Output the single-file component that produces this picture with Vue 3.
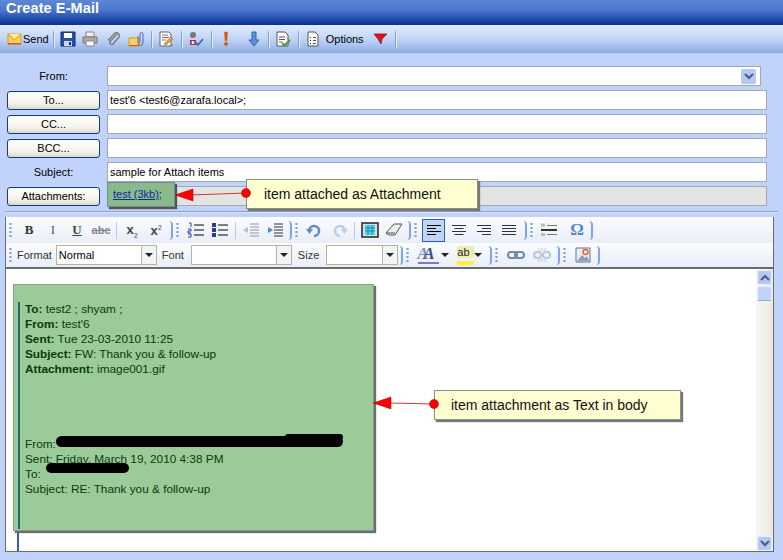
<script setup>
const rows = [
  { btn: 'To...', value: "test'6 <test6@zarafa.local>;" },
  { btn: 'CC...', value: '' },
  { btn: 'BCC...', value: '' },
  { label: 'Subject:', value: 'sample for Attach items' },
]
const headers = [
  ['To:', 'test2 ; shyam ;'],
  ['From:', "test'6"],
  ['Sent:', 'Tue 23-03-2010 11:25'],
  ['Subject:', 'FW: Thank you & follow-up'],
  ['Attachment:', 'image001.gif'],
]
</script>

<template>
  <div class="win">
    <div class="title">Create E-Mail</div>

    <div class="mainbar">
      <svg class="ic" viewBox="0 0 16 16"><path d="M1 3h13v10H1z" fill="#f7d35c" stroke="#d99a1e"/><path d="M1 3l6.5 6L14 3" fill="#fdeb9b" stroke="#d98a1e"/><path d="M1 12h13v1.500H1z" fill="#e2502a"/></svg>
      <span class="send">Send</span>
      <i class="sep" />
      <svg class="ic" viewBox="0 0 16 16"><path d="M1 1h14v14H1z" fill="#2a4fa6" stroke="#12296e"/><path d="M4 2h8v5H4z" fill="#fff"/><path d="M4 10h8v5H4z" fill="#c9d6ef"/><path d="M9 11h2v3H9z" fill="#12296e"/></svg>
      <svg class="ic g" viewBox="0 0 16 16"><path d="M4 1h8v5H4z" fill="#eee" stroke="#888"/><path d="M1 6h14v6H1z" fill="#aaa" stroke="#777"/><path d="M4 10h8v5H4z" fill="#fff" stroke="#888"/></svg>
      <svg class="ic g" viewBox="0 0 16 16"><path d="M12 3L5 10.500a2 2 0 0 0 3 2.500l6-7a3 3 0 0 0-4-4L3 9.500" fill="none" stroke="#7a7a7a" stroke-width="1.500"/></svg>
      <svg class="ic" viewBox="0 0 16 16"><path d="M1 7h10v8H1z" fill="#f7d35c" stroke="#d99a1e"/><path d="M1 14h10v1H1z" fill="#e2502a"/><path d="M12 12V3a1.500 1.500 0 0 1 3 0v9a2.500 2.500 0 0 1-5 0V5" fill="none" stroke="#4f6fa8"/></svg>
      <i class="sep" />
      <svg class="ic" viewBox="0 0 16 16"><path d="M2 1h9l2 2v12H2z" fill="#fff" stroke="#666"/><path d="M4 4h6M4 6.500h7M4 9h4" stroke="#777"/><path d="M6 13l7-7 2 2-7 6z" fill="#e9a23b" stroke="#a05f12" stroke-width=".6"/><path d="M13 13l2 2" stroke="#3b9a3b"/></svg>
      <i class="sep" />
      <svg class="ic" viewBox="0 0 16 16"><circle cx="5" cy="4" r="3" fill="#777"/><path d="M2 9h6v5H2z" fill="#a33" /><circle cx="5" cy="11.500" r="1.500" fill="#fff"/><path d="M7 11l3 3 5-6" fill="none" stroke="#3d68b8" stroke-width="1.800"/></svg>
      <i class="sep" />
      <svg class="ic" viewBox="0 0 16 16"><path d="M6.500 1h3l-.6 9H7.100z" fill="#e5412b" stroke="#b9801e" stroke-width=".6"/><circle cx="8" cy="13" r="1.800" fill="#e5412b" stroke="#b9801e" stroke-width=".6"/></svg>
      <svg class="ic wide" viewBox="0 0 16 16"><path d="M6 1h4v8h3l-5 6-5-6h3z" fill="#5a93de" stroke="#2f62ae"/></svg>
      <i class="sep" />
      <svg class="ic" viewBox="0 0 16 16"><path d="M2 1h8l3 3v11H2z" fill="#fff" stroke="#555"/><path d="M4 6h6M4 8.500h6M4 11h3" stroke="#555"/><path d="M7 12l2.500 2.500L15 9" fill="none" stroke="#3c9a3c" stroke-width="1.800"/></svg>
      <i class="sep" />
      <svg class="ic" viewBox="0 0 16 16"><path d="M3 1h7l3 3v11H3z" fill="#fff" stroke="#555"/><path d="M5 6h1v1H5zM5 9h1v1H5zM5 12h1v1H5z" fill="#2a2a2a"/><path d="M8 6.500h3M8 9.500h3M8 12.500h3" stroke="#555"/></svg>
      <span class="opt">Options</span>
      <svg class="ic flag" viewBox="0 0 16 16"><path d="M1 3h13L9 8l-1 5-3-5z" fill="#e8101a" stroke="#7a1620" stroke-width=".7"/></svg>
      <i class="sep" />
    </div>

    <div class="form">
      <div class="row from">
        <div class="lead"><span class="lbl">From:</span></div>
        <div class="field select">
          <span class="chev"><svg viewBox="0 0 10 7" width="10" height="7"><path d="M1 1l4 4 4-4" fill="none" stroke="#4a5a80" stroke-width="2"/></svg></span>
        </div>
      </div>
      <div v-for="r in rows" :key="r.value + r.btn" class="row">
        <div class="lead">
          <button v-if="r.btn" class="btn">{{ r.btn }}</button>
          <span v-else class="lbl">{{ r.label }}</span>
        </div>
        <div class="field">{{ r.value }}</div>
      </div>
      <div class="row">
        <div class="lead"><button class="btn">Attachments:</button></div>
        <div class="field attach" />
      </div>
    </div>

    <div class="divider" />

    <div class="editor">
      <div class="tools">
        <div class="tline">
          <span class="grip" />
          <b class="t tb">B</b><em class="t ti">I</em><u class="t tu">U</u><s class="t ts">abc</s>
          <i class="tsep" />
          <span class="t tx">x<sub>2</sub></span><span class="t tx">x<sup>2</sup></span>
          <i class="bracket" /><span class="grip" />
          <svg class="e" viewBox="0 0 18 16"><path d="M7 3h10M7 8h10M7 13h10" stroke="#555" stroke-width="1.500"/><path d="M2 1h2v4M1 7h3v2H1v2h3M1 12h3v3H1" fill="none" stroke="#2a3f9a"/></svg>
          <svg class="e" viewBox="0 0 18 16"><path d="M7 3h10M7 8h10M7 13h10" stroke="#555" stroke-width="1.500"/><path d="M1 1h4v4H1zM1 6h4v4H1zM1 11h4v4H1z" fill="#33379a"/></svg>
          <i class="tsep" />
          <svg class="e dim" viewBox="0 0 18 16"><path d="M8 2h9M8 5h9M8 8h9M8 11h9M8 14h9" stroke="#777"/><path d="M1 8l5-3v6z" fill="#8fb2e6"/></svg>
          <svg class="e" viewBox="0 0 18 16"><path d="M8 2h9M8 5h9M8 8h9M8 11h9M8 14h9" stroke="#333"/><path d="M7 8L2 5v6z" fill="#4c86d8"/></svg>
          <i class="bracket" /><span class="grip" />
          <svg class="e" viewBox="0 0 18 16"><path d="M3 9a5 5 0 1 1 5 5" fill="none" stroke="#5b8dcf" stroke-width="2.500"/><path d="M0 7h7l-3.500 5z" fill="#5b8dcf"/></svg>
          <svg class="e dim" viewBox="0 0 18 16"><path d="M15 9a5 5 0 1 0-5 5" fill="none" stroke="#a9c3e8" stroke-width="2.500"/><path d="M18 7h-7l3.500 5z" fill="#a9c3e8"/></svg>
          <i class="tsep" />
          <svg class="e" viewBox="0 0 18 16"><path d="M1 1h16v14H1z" fill="#ddd" stroke="#222" stroke-width="1.500"/><path d="M4 3h10v10H4z" fill="#37e0e8"/><path d="M4 6h10M4 9h10M7 3v10M11 3v10" stroke="#3a6aa8" stroke-width=".8"/></svg>
          <svg class="e" viewBox="0 0 18 16"><path d="M1 11l8-9h8l-7 11H4z" fill="#ededed" stroke="#555"/><path d="M1 11h9" stroke="#555"/></svg>
          <i class="bracket" /><span class="grip" />
          <span class="al on"><svg viewBox="0 0 14 11" width="14" height="11"><path d="M0 .5h14M0 3.500h9M0 6.500h14M0 9.500h9" stroke="#000"/></svg></span>
          <span class="al"><svg viewBox="0 0 14 11" width="14" height="11"><path d="M0 .5h14M2.500 3.500h9M0 6.500h14M2.500 9.500h9" stroke="#333"/></svg></span>
          <span class="al"><svg viewBox="0 0 14 11" width="14" height="11"><path d="M0 .5h14M5 3.500h9M0 6.500h14M5 9.500h9" stroke="#333"/></svg></span>
          <span class="al"><svg viewBox="0 0 14 11" width="14" height="11"><path d="M0 .5h14M0 3.500h14M0 6.500h14M0 9.500h14" stroke="#333"/></svg></span>
          <i class="bracket" /><span class="grip" />
          <svg class="e hr" viewBox="0 0 16 14"><path d="M0 7h16" stroke="#333" stroke-width="2"/><path d="M6 2.500h10M6 11.500h10" stroke="#777"/><path d="M0 .5h4v3H0zM0 10h4v3H0z" fill="#bbb"/></svg>
          <span class="omega">Ω</span>
          <i class="bracket" />
        </div>
        <div class="tline second">
          <span class="grip" />
          <span class="tl">Format</span>
          <span class="combo w100"><span class="ctext">Normal</span><span class="drop" /></span>
          <span class="tl font">Font</span>
          <span class="combo w100"><span class="ctext" /><span class="drop" /></span>
          <span class="tl size">Size</span>
          <span class="combo w70"><span class="ctext" /><span class="drop" /></span>
          <i class="bracket" /><span class="grip" />
          <span class="fc">A<span class="fc2">A</span><i class="fcbar" /></span><span class="mini" />
          <span class="hl">ab<i class="hlbar" /></span><span class="mini" />
          <i class="bracket" /><span class="grip" />
          <svg class="e link" viewBox="0 0 18 12"><rect x="1" y="3" width="9" height="6" rx="3" fill="none" stroke="#7189ad" stroke-width="2"/><rect x="8" y="3" width="9" height="6" rx="3" fill="none" stroke="#7189ad" stroke-width="2"/></svg>
          <svg class="e link dim" viewBox="0 0 18 14"><rect x="1" y="4" width="7" height="6" rx="3" fill="none" stroke="#aab8cc" stroke-width="2"/><rect x="10" y="4" width="7" height="6" rx="3" fill="none" stroke="#aab8cc" stroke-width="2"/><path d="M9 0v3M9 11v3M5 0l2 3M13 0l-2 3M5 14l2-3M13 14l-2-3" stroke="#aab8cc"/></svg>
          <i class="bracket" /><span class="grip" />
          <svg class="e" viewBox="0 0 16 16"><path d="M1 1h14v14H1z" fill="#e8eef6" stroke="#66708a"/><path d="M2 14l5-6 3 3 2-2 2 5z" fill="#8aa0bc"/><circle cx="10.500" cy="5" r="2.500" fill="none" stroke="#e2662e" stroke-width="1.500"/></svg>
          <i class="bracket" />
        </div>
      </div>

      <div class="body">
        <div class="page">
          <div class="note">
            <div class="quote">
              <div class="hdr">
                <div v-for="h in headers" :key="h[0]"><b>{{ h[0] }}</b> {{ h[1] }}</div>
              </div>
              <div class="orig">
                <div>From: </div>
                <div>Sent: Friday, March 19, 2010 4:38 PM</div>
                <div>To: </div>
                <div>Subject: RE: Thank you &amp; follow-up</div>
              </div>
            </div>
          </div>
          <div class="tail" />
        </div>
        <div class="scroll">
          <span class="sb"><svg viewBox="0 0 10 7" width="10" height="7"><path d="M1 6l4-4 4 4" fill="none" stroke="#4a5a80" stroke-width="2"/></svg></span>
          <span class="thumb" />
          <span class="track" />
          <span class="sb"><svg viewBox="0 0 10 7" width="10" height="7"><path d="M1 1l4 4 4-4" fill="none" stroke="#4a5a80" stroke-width="2"/></svg></span>
        </div>
      </div>
    </div>

    <!-- things pasted over the screenshot -->
    <div class="att-note"><a>test (3kb)</a>;</div>
    <div class="callout c1">item attached as Attachment</div>
    <div class="callout c2">item attachment as Text in body</div>
    <svg class="arrows" viewBox="0 0 783 560" width="783" height="560">
      <path d="M190 195L246 193" stroke="#d9372a" stroke-width="1"/>
      <path d="M175 195l18-6v12z" fill="#f00" stroke="#a40000" stroke-width=".5"/>
      <circle cx="246" cy="193" r="4.500" fill="#f00" stroke="#a40000" stroke-width=".5"/>
      <path d="M390 403L434 404" stroke="#d9372a" stroke-width="1"/>
      <path d="M373 403l18-6v12z" fill="#f00" stroke="#a40000" stroke-width=".5"/>
      <circle cx="434" cy="404" r="4.500" fill="#f00" stroke="#a40000" stroke-width=".5"/>
    </svg>
    <div class="ink i1" /><div class="ink i2" /><div class="ink i3" />
  </div>
</template>

<style>
html, body { margin: 0; background: #c1d3fb; }
</style>

<style scoped>
.win { position: relative; width: 783px; height: 560px; overflow: hidden; background: #c1d3fb; font-family: Tahoma, "DejaVu Sans", "Liberation Sans", sans-serif; font-size: 11px; color: #000; }
.title { height: 25px; line-height: 24px; padding-left: 6px; box-sizing: border-box; background: linear-gradient(#5f87d6, #4a76cf 40%, #073192); color: #fff; font: bold 14.5px "Liberation Sans", sans-serif; letter-spacing: .1px; }
.mainbar { height: 28px; display: flex; align-items: center; padding-left: 7px; box-sizing: border-box; background: linear-gradient(#e2ecfd, #bdd1f5 55%, #8bacE4); font-family: "Liberation Sans", sans-serif; }
.ic { width: 16px; height: 16px; flex: none; margin-right: 6px; }
.ic.wide { margin-left: 6px; margin-right: 5px; }
.ic.g { margin-right: 7px; }
.send { margin-left: -6px; margin-right: 3px; }
.sep { flex: none; width: 1px; height: 17px; background: #7f9fd8; border-right: 1px solid #e8f0ff; margin: 0 5px 0 1px; }
.opt { margin-left: -1px; margin-right: 9px; }
.flag { margin-right: 5px; margin-left: 0; }

.form { padding-top: 13px; display: flex; flex-direction: column; gap: 4px; font-family: "Liberation Sans", sans-serif; }
.row { display: flex; align-items: stretch; height: 20px; padding-left: 7px; }
.lead { flex: none; width: 93px; margin-right: 7px; display: flex; align-items: center; justify-content: center; }
.lbl { font-size: 11px; }
.btn { width: 93px; height: 19px; padding: 0; border: 1px solid #0f3f76; border-radius: 3px; background: linear-gradient(#fff, #f3f1e8 70%, #dcd8cc); font: 11px "Liberation Sans", sans-serif; color: #000; }
.field { width: 660px; box-sizing: border-box; background: #fff; border: 1px solid #a3a7b0; padding-left: 2px; line-height: 18px; font-size: 11px; white-space: pre; }
.select { width: 654px; position: relative; display: flex; justify-content: flex-end; align-items: center; padding-right: 4px; }
.chev { width: 15px; height: 15px; background: #b5c9f5; border-radius: 2px; display: flex; align-items: center; justify-content: center; }
.attach { background: #e1e4e2; }

.divider { height: 1px; margin: 5px 5px 0; background: #8f9fc2; border-bottom: 1px solid #dbe5fc; }

.editor { margin: 4px 9px 0 5px; border: 1px solid #6c6c6c; border-top: 0; height: 335px; display: flex; flex-direction: column; box-sizing: border-box; }
.tools { height: 50px; flex: none; background: #f8f8fb; border-bottom: 2px solid #6c6c6c; display: flex; flex-direction: column; }
.tline { height: 26px; display: flex; align-items: center; padding-left: 3px; background: linear-gradient(#fbfcfe, #e8edf8); }
.second { height: 24px; }
.grip { flex: none; width: 3px; height: 17px; margin-right: 5px; background: radial-gradient(circle, #7fa0e0 1px, transparent 1.300px) 0 0 / 3px 4px; }
.bracket { flex: none; width: 4px; height: 19px; margin: 0 3px 0 1px; border-right: 2px solid #7fa5e8; border-radius: 0 5px 5px 0; box-sizing: border-box; }
.t { flex: none; width: 24px; text-align: center; font: 13px "Liberation Serif", serif; color: #444; }
.tb { font-weight: bold; font-size: 13px; color: #333; }
.ti { color: #555; }
.tu { color: #444; font-weight: bold; }
.ts { color: #888; font-size: 11px; font-weight: bold; font-family: "Liberation Sans", sans-serif; }
.tx { font-weight: bold; font-size: 13px; font-family: "Liberation Sans", sans-serif; }
.tx sub, .tx sup { font-size: 7px; color: #6a7fb2; }
.tsep { flex: none; width: 1px; height: 17px; background: #b8cbee; margin: 0 3px; }
.e { flex: none; width: 18px; height: 16px; margin: 0 3px; }
.dim { opacity: .75; }
.al { flex: none; width: 23px; height: 23px; box-sizing: border-box; display: flex; align-items: center; justify-content: center; margin-right: 2px; }
.al.on { background: #c0d5f2; border: 1px solid #2c62b5; }
.hr { width: 16px; }
.omega { flex: none; width: 22px; margin-left: 6px; font: bold 17px "Liberation Serif", serif; color: #5a86c6; text-align: center; }
.tl { flex: none; margin: 0 3px 0 0; font: 11px "Liberation Sans", sans-serif; color: #333; padding: 0 1px 0 0; }
.font { margin-left: 5px; margin-right: 6px; }
.size { margin-left: 6px; margin-right: 6px; }
.combo { flex: none; height: 20px; box-sizing: border-box; background: #fff; border: 1px solid #b8b49c; display: flex; font: 11px "Liberation Sans", sans-serif; line-height: 18px; }
.w100 { width: 101px; }
.w70 { width: 72px; }
.ctext { flex: 1; padding-left: 2px; }
.drop { flex: none; width: 14px; border-left: 1px solid #b8b49c; background: #f3f4f6; position: relative; }
.drop::after, .mini::after { content: ""; position: absolute; left: 3px; top: 7px; border: 4px solid transparent; border-top-color: #222; border-bottom: 0; }
.fc { position: relative; flex: none; width: 24px; height: 18px; margin-left: 3px; font: italic bold 17px "Liberation Serif", serif; color: #7f97c7; line-height: 16px; }
.fc2 { position: absolute; left: 6px; top: 0; color: #3f4f88; }
.fcbar { position: absolute; left: 1px; right: 2px; bottom: 0; height: 2px; background: #8a70c8; }
.mini { position: relative; flex: none; width: 10px; height: 16px; margin-right: 3px; }
.mini::after { left: 0; top: 6px; }
.hl { position: relative; flex: none; width: 17px; height: 18px; margin-left: 3px; padding-left: 0; font: 11px "Liberation Sans", sans-serif; line-height: 12px; background: linear-gradient(#f0ecb0 65%, transparent 65%); color: #223; }
.hlbar { position: absolute; left: 0; right: 0; bottom: -1px; height: 4px; background: #ffef3a; }
.link { height: 14px; margin: 0 4px; }

.body { flex: 1; min-height: 0; display: flex; background: #fff; }
.page { flex: 1; padding: 15px 0 0 7px; display: flex; flex-direction: column; }
.note { width: 361px; height: 247px; box-sizing: border-box; background: #9bcb98; border: 1px solid #8e9a8e; box-shadow: 2px 2px 1px #6d6d6d; padding-top: 17px; flex: none; }
.quote { margin-left: 4px; height: 227px; border-left: 2px solid #1b6a74; padding-left: 5px; color: #0c3a0c; font: 11.800px/15px "Liberation Sans", sans-serif; }
.hdr b { color: #0a3a0a; }
.orig { margin-top: 60px; }
.tail { margin-left: 4px; width: 2px; flex: 1; margin-top: 2px; background: #3a5db0; }
.scroll { flex: none; width: 17px; margin-right: 0; display: flex; flex-direction: column; align-items: center; background: linear-gradient(90deg, #f8f7f3, #ece9e0); }
.sb { width: 15px; height: 15px; margin-top: 1px; background: #b5c9f5; border: 1px solid #e8effd; border-radius: 2px; display: flex; align-items: center; justify-content: center; box-sizing: border-box; }
.thumb { width: 15px; height: 15px; margin-top: 1px; background: #c1d3fb; border: 1px solid #e8effd; border-bottom-color: #8aa6e0; border-radius: 2px; box-sizing: border-box; }
.track { flex: 1; }

.att-note { position: absolute; left: 107px; top: 182px; width: 68px; height: 25px; box-sizing: border-box; background: #8ab98c; border: 1px solid #6f8f96; box-shadow: 2px 2px 1px #555; padding: 5px 0 0 5px; font: 11px "Liberation Sans", sans-serif; color: #08205a; }
.att-note a { color: #0a2a9a; text-decoration: underline; }
.callout { position: absolute; box-sizing: border-box; background: #ffffd2; border: 1px solid #8a8f8a; box-shadow: 2px 2px 1px #777; font: 14px "Liberation Sans", sans-serif; color: #111; display: flex; align-items: center; }
.c1 { left: 246px; top: 179px; width: 232px; height: 30px; padding-left: 17px; }
.c2 { left: 434px; top: 390px; width: 247px; height: 30px; padding-left: 16px; }
.arrows { position: absolute; left: 0; top: 0; pointer-events: none; }
.ink { position: absolute; background: #000; border-radius: 6px; }
.i1 { left: 56px; top: 436px; width: 287px; height: 11px; }
.i2 { left: 46px; top: 463px; width: 83px; height: 10px; }
.i3 { left: 285px; top: 434px; width: 58px; height: 6px; border-radius: 4px; }
</style>
